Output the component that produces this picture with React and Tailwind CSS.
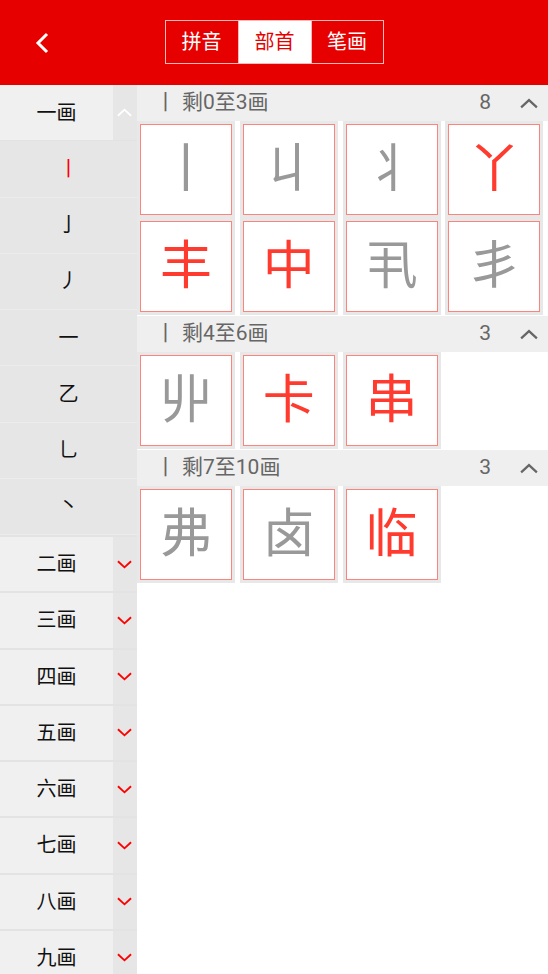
import React from "react";

const groups = [
  {
    label: "剩0至3画",
    count: 8,
    chars: [
      ["丨", "gray"],
      ["丩", "gray"],
      ["丬", "gray"],
      ["丫", "red"],
      ["丰", "red"],
      ["中", "red"],
      ["丮", "gray"],
      ["丯", "gray"],
    ],
  },
  {
    label: "剩4至6画",
    count: 3,
    chars: [
      ["丱", "gray"],
      ["卡", "red"],
      ["串", "red"],
    ],
  },
  {
    label: "剩7至10画",
    count: 3,
    chars: [
      ["弗", "gray"],
      ["卤", "gray"],
      ["临", "red"],
    ],
  },
];

const strokes = ["丨", "亅", "丿", "一", "乙", "乚", "丶"];
const parents = ["二画", "三画", "四画", "五画", "六画", "七画", "八画", "九画"];

const Chevron = ({ up, color, className }) => (
  <svg viewBox="0 0 16 9" className={className} fill="none">
    <polyline
      points={up ? "1,8 8,1.5 15,8" : "1,1 8,7.5 15,1"}
      stroke={color}
      strokeWidth="2"
    />
  </svg>
);

const App = () => {
  return (
    <div
      className="h-[974px] overflow-hidden flex flex-col bg-white"
      style={{ fontFamily: 'Roboto, "Noto Sans CJK SC", sans-serif' }}
    >
      {/* top bar */}
      <div className="h-[85px] shrink-0 bg-[#e60000] relative flex items-center justify-center">
        <button className="absolute left-[31px] top-[28px] p-1">
          <svg viewBox="0 0 14 22" className="w-[14px] h-[22px]" fill="none">
            <polyline points="12,2 3,11 12,20" stroke="#fff" strokeWidth="3" />
          </svg>
        </button>
        <div className="flex border border-[#ffb8b8] h-[44px] mt-[-1px]">
          <div className="w-[72px] flex items-center justify-center text-white text-[20px]">拼音</div>
          <div className="w-[74px] flex items-center justify-center bg-white text-[#e60000] text-[20px] border-x border-[#ffb8b8]">部首</div>
          <div className="w-[71px] flex items-center justify-center text-white text-[20px]">笔画</div>
        </div>
      </div>

      <div className="flex flex-1 min-h-0">
        {/* sidebar */}
        <div className="w-[137px] shrink-0">
          <div className="h-[56.25px] flex border-b border-[#e2e2e2]">
            <div className="w-[113px] bg-[#f0f0f0] flex items-center justify-center text-[20px] text-[#111]">一画</div>
            <div className="flex-1 bg-[#e6e6e6] flex items-center justify-center pr-[1px]">
              <Chevron up color="#fff" className="w-[15px] h-[9px]" />
            </div>
          </div>
          {strokes.map((s, i) => (
            <div
              key={s}
              className={`h-[56.25px] bg-[#e6e6e6] border-b border-[#ececec] flex items-center justify-center text-[20px] ${
                i === 0 ? "text-[#ff0000]" : "text-[#111]"
              }`}
            >
              {s}
            </div>
          ))}
          {parents.map((p) => (
            <div key={p} className="h-[56.25px] flex border-t-2 border-[#e3e3e3]">
              <div className="w-[113px] bg-[#f0f0f0] flex items-center justify-center text-[20px] text-[#111]">{p}</div>
              <div className="flex-1 bg-[#e6e6e6] flex items-center justify-center pr-[1px]">
                <Chevron color="#ff0000" className="w-[15px] h-[9px]" />
              </div>
            </div>
          ))}
        </div>

        {/* main */}
        <div className="flex-1">
          {groups.map((g) => (
            <div key={g.label}>
              <div className="h-[36px] bg-[#efefef] flex items-center text-[21px] text-[#666] pl-[18px] pr-[10px]">
                <span>丨</span>
                <span className="ml-[6px]">{g.label}</span>
                <span className="ml-auto mr-[29px]">{g.count}</span>
                <Chevron up color="#666" className="w-[18px] h-[11px]" />
              </div>
              <div className="grid grid-cols-4 pb-[1px]">
                {g.chars.map(([c, tone]) => (
                  <div key={c} className="pr-[4.75px]">
                    <div className="bg-[#e8e8e8] p-[3px] h-[97px]">
                      <div
                        className={`h-full bg-white border border-[#fb857d] flex items-center justify-center text-[52px] leading-none ${
                          tone === "red" ? "text-[#ff3b2f]" : "text-[#999]"
                        }`}
                      >
                        {c}
                      </div>
                    </div>
                  </div>
                ))}
              </div>
            </div>
          ))}
        </div>
      </div>
    </div>
  );
};

export default App;
